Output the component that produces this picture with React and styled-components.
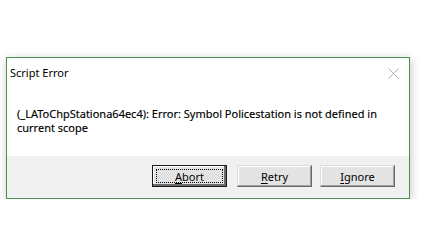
import React from 'react'
import styled, { createGlobalStyle } from 'styled-components';

const GlobalStyle = createGlobalStyle`
  html, body {
    margin: 0;
    background: #ffffff;
  }
  body {
    font-family: "Noto Sans", "Liberation Sans", sans-serif;
    font-size: 11px;
    color: #000000;
  }
`;

const buttons = [
  { key: 'abort', mnemonic: 'A', rest: 'bort', isDefault: true },
  { key: 'retry', mnemonic: 'R', rest: 'etry' },
  { key: 'ignore', mnemonic: 'I', rest: 'gnore' },
];

const App = () => {
  return (
    <Page>
      <GlobalStyle />
      <Dialog>
        <TitleBar>
          <Title>Script Error</Title>
          <CloseButton aria-label="Close">
            <svg width="11" height="11" viewBox="0 0 11 11">
              <path d="M0.5 0.5 L10.5 10.5 M10.5 0.5 L0.5 10.5" stroke="#b0b0b0" strokeWidth="1" fill="none" />
            </svg>
          </CloseButton>
        </TitleBar>
        <Body>
          <Message>(_LAToChpStationa64ec4): Error: Symbol Policestation is not defined in</Message>
          <Message>current scope</Message>
        </Body>
        <Footer>
          {buttons.map(b => (
            <Button key={b.key} $isDefault={b.isDefault}>
              <u>{b.mnemonic}</u>{b.rest}
            </Button>
          ))}
        </Footer>
      </Dialog>
    </Page>
  )
}

export default App;

const Page = styled.div`
  padding: 57px 0 0 6px;
`;

const Dialog = styled.div`
  width: 402px;
  border: 1px solid #4f8f4f;
  background: #ffffff;
  box-shadow: 1px 2px 9px rgba(0, 0, 0, 0.22);
`;

const TitleBar = styled.div`
  display: flex;
  justify-content: space-between;
  align-items: center;
  height: 29px;
  padding-left: 3px;
`;

const Title = styled.div`
  font-size: 11px;
  line-height: 14px;
  padding-top: 1px;
`;

const CloseButton = styled.div`
  display: flex;
  align-items: center;
  justify-content: center;
  width: 30px;
  height: 29px;
  margin-right: 1px;
  padding-top: 1px;
`;

const Body = styled.div`
  height: 69px;
  box-sizing: border-box;
  padding: 20px 10px 0;
`;

const Message = styled.div`
  font-size: 11px;
  line-height: 14px;
  white-space: nowrap;
  -webkit-text-stroke: 0.15px #000000;
`;

const Footer = styled.div`
  display: flex;
  justify-content: flex-end;
  align-items: flex-start;
  gap: 8px;
  height: 42px;
  box-sizing: border-box;
  padding: 9px 14px 0 0;
  background: #f0f0f0;
`;

const Button = styled.div`
  position: relative;
  box-sizing: border-box;
  width: 75px;
  height: 22px;
  display: flex;
  align-items: center;
  justify-content: center;
  font-size: 11px;
  background: #e3e3e3;
  border: 1px solid;
  border-color: #dcdcdc #6a6a6a #6a6a6a #dcdcdc;
  box-shadow: inset -1px -1px #a0a0a0, inset 1px 1px #ffffff;
  margin-right: ${p => (p.$isDefault ? '2px' : '0')};

  ${p => p.$isDefault && `
    border-color: #1a1a1a;
    box-shadow: inset -2px -2px #6a6a6a, inset 1px 1px #ffffff;

    &::after {
      content: '';
      position: absolute;
      inset: 3px;
      border: 1px dotted #000000;
    }
  `}

  u {
    text-decoration-thickness: 1px;
    text-underline-offset: 2px;
  }
`;
